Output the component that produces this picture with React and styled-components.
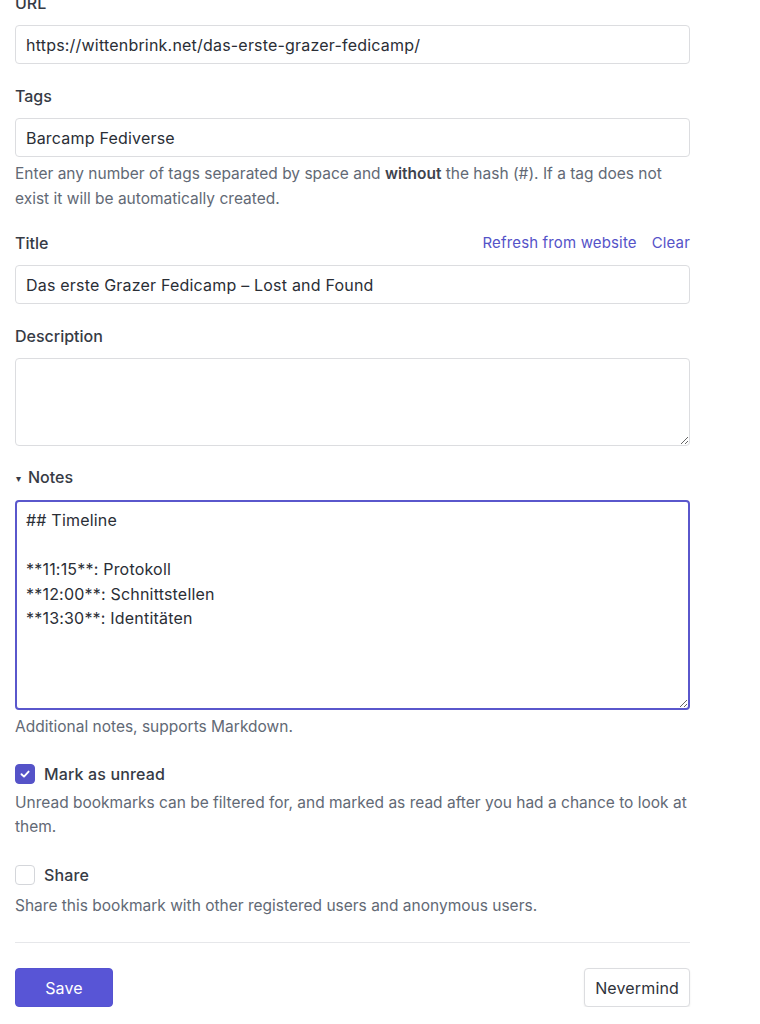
import styled, { createGlobalStyle } from 'styled-components';

const GlobalStyle = createGlobalStyle`
  body {
    margin: 0;
    background: #fff;
    font-family: Inter, "Noto Sans", sans-serif;
    color: #363b45;
  }
`;

function App() {
  return (
    <>
      <GlobalStyle />
      <Form>
        <Group $first>
          <Label>URL</Label>
          <Input defaultValue="https://wittenbrink.net/das-erste-grazer-fedicamp/" />
        </Group>

        <Group>
          <Label>Tags</Label>
          <Input defaultValue="Barcamp Fediverse" />
          <Hint>
            Enter any number of tags separated by space and <b>without</b> the hash (#). If a tag does not
            exist it will be automatically created.
          </Hint>
        </Group>

        <Group>
          <LabelRow>
            <Label>Title</Label>
            <Links>
              <Link href="#">Refresh from website</Link>
              <Link href="#">Clear</Link>
            </Links>
          </LabelRow>
          <Input defaultValue="Das erste Grazer Fedicamp – Lost and Found" />
        </Group>

        <Group>
          <Label>Description</Label>
          <TextArea $height={88} />
        </Group>

        <Group $gap={19}>
          <Details open>
            <Summary>Notes</Summary>
            <TextArea
              $height={210}
              $focused
              autoFocus
              defaultValue={'## Timeline\n\n**11:15**: Protokoll\n**12:00**: Schnittstellen\n**13:30**: Identitäten'}
            />
          </Details>
          <Hint>Additional notes, supports Markdown.</Hint>
        </Group>

        <CheckGroup $gap={22}>
          <CheckRow>
            <Box $checked>
              <svg width="12" height="12" viewBox="0 0 12 12">
                <path d="M2.5 6.2 L5 8.6 L9.6 3.6" fill="none" stroke="#fff" strokeWidth="1.9" strokeLinecap="round" strokeLinejoin="round" />
              </svg>
            </Box>
            <CheckLabel>Mark as unread</CheckLabel>
          </CheckRow>
          <Hint>Unread bookmarks can be filtered for, and marked as read after you had a chance to look at them.</Hint>
        </CheckGroup>

        <CheckGroup $gap={23}>
          <CheckRow>
            <Box />
            <CheckLabel>Share</CheckLabel>
          </CheckRow>
          <Hint $top={7}>Share this bookmark with other registered users and anonymous users.</Hint>
        </CheckGroup>

        <Divider />

        <Actions>
          <Button $primary>Save</Button>
          <Button>Nevermind</Button>
        </Actions>
      </Form>
    </>
  );
}

export default App;

const Form = styled.div`
  width: 675px;
  padding: 0 0 0 15px;
  display: flex;
  flex-direction: column;
`;

const Group = styled.div`
  display: flex;
  flex-direction: column;
  margin-top: ${(p) => (p.$first ? -9 : p.$gap ?? 20)}px;
`;

const Label = styled.label`
  display: block;
  font-size: 16px;
  font-weight: 500;
  line-height: 24px;
  color: #363b45;
  margin-bottom: 10px;
`;

const LabelRow = styled.div`
  display: flex;
  justify-content: space-between;
  align-items: flex-start;
`;

const Links = styled.div`
  display: flex;
  gap: 15px;
  line-height: 24px;
`;

const Link = styled.a`
  font-size: 15px;
  letter-spacing: 0.15px;
  color: #5553c8;
  text-decoration: none;
`;

const Input = styled.input`
  box-sizing: border-box;
  width: 100%;
  height: 39px;
  padding: 0 10px;
  border: 1px solid #dcdde0;
  border-radius: 4px;
  font-family: Inter, "Noto Sans", sans-serif;
  font-size: 16px;
  letter-spacing: 0.2px;
  color: #2a2e36;
  background: #fff;
  outline: none;
`;

const TextArea = styled.textarea`
  box-sizing: border-box;
  display: block;
  width: 100%;
  height: ${(p) => p.$height}px;
  padding: ${(p) => (p.$focused ? '6px 9px' : '7px 10px')};
  border: ${(p) => (p.$focused ? '2px solid #5a57cc' : '1px solid #dcdde0')};
  border-radius: 4px;
  font-family: Inter, "Noto Sans", sans-serif;
  font-size: 16px;
  letter-spacing: 0.2px;
  line-height: 24.5px;
  color: #2a2e36;
  background: #fff;
  outline: none;
  caret-color: #111;
`;

const Details = styled.details`
  display: block;
`;

const Summary = styled.summary`
  list-style: none;
  font-size: 16px;
  font-weight: 500;
  line-height: 24px;
  color: #363b45;
  margin-bottom: 10px;
  cursor: pointer;

  &::-webkit-details-marker {
    display: none;
  }

  &::before {
    content: '▾';
    display: inline-block;
    font-size: 10px;
    width: 12px;
    padding-left: 1px;
    vertical-align: 1px;
  }
`;

const Hint = styled.div`
  margin-top: ${(p) => p.$top ?? 5}px;
  font-size: 15.5px;
  line-height: 24.5px;
  color: #626975;

  b {
    font-weight: 600;
    color: #3e434d;
  }
`;

const CheckGroup = styled.div`
  display: flex;
  flex-direction: column;
  margin-top: ${(p) => p.$gap}px;
`;

const CheckRow = styled.div`
  display: flex;
  align-items: center;
  gap: 9px;
  height: 24px;
`;

const Box = styled.span`
  box-sizing: border-box;
  width: 20px;
  height: 20px;
  border-radius: 4px;
  display: flex;
  align-items: center;
  justify-content: center;
  background: ${(p) => (p.$checked ? '#5553c8' : '#fff')};
  border: 1px solid ${(p) => (p.$checked ? '#5553c8' : '#d4d6da')};
`;

const CheckLabel = styled.span`
  font-size: 16px;
  font-weight: 500;
  letter-spacing: 0.15px;
  color: #363b45;
`;

const Divider = styled.hr`
  width: 100%;
  margin: 24px 0 0;
  border: 0;
  border-top: 1px solid #e6e7ea;
`;

const Actions = styled.div`
  display: flex;
  justify-content: space-between;
  margin-top: 25px;
`;

const Button = styled.button`
  box-sizing: border-box;
  height: 39px;
  width: ${(p) => (p.$primary ? '98px' : 'auto')};
  padding: 0 ${(p) => (p.$primary ? '0' : '10px')};
  border-radius: 4px;
  border: 1px solid ${(p) => (p.$primary ? '#5553d0' : '#dcdde0')};
  background: ${(p) => (p.$primary ? '#5855d6' : '#fff')};
  color: ${(p) => (p.$primary ? '#fff' : '#2f333b')};
  box-shadow: ${(p) => (p.$primary ? 'none' : '0 1px 2px rgba(0,0,0,0.08)')};
  font-family: Inter, "Noto Sans", sans-serif;
  font-size: 16px;
  font-weight: 400;
  letter-spacing: 0.15px;
  cursor: pointer;
`;
